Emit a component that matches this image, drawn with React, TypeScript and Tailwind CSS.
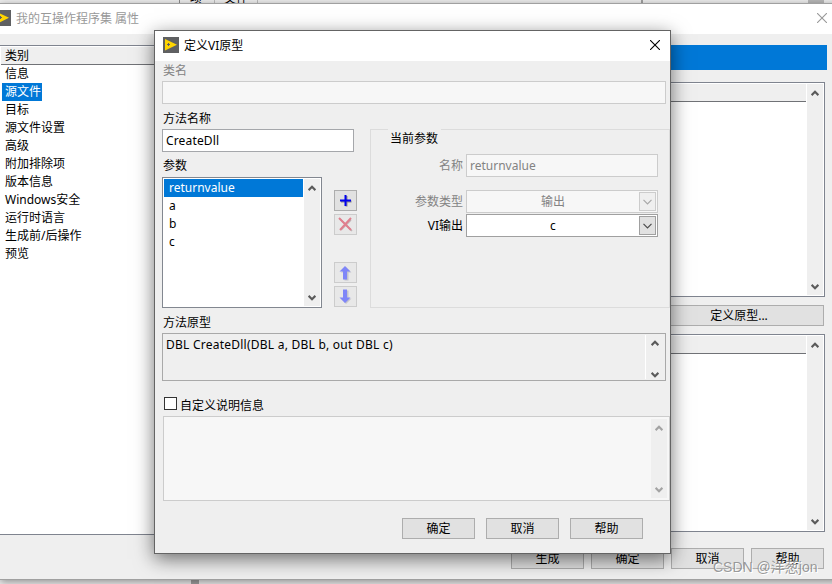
import clsx from "clsx"
import React from "react"

const categories = [
  "信息",
  "源文件",
  "目标",
  "源文件设置",
  "高级",
  "附加排除项",
  "版本信息",
  "Windows安全",
  "运行时语言",
  "生成前/后操作",
  "预览"
]

const parameters = ["returnvalue", "a", "b", "c"]

const LogoIcon: React.FC = () => (
  <svg width="16" height="16" viewBox="0 0 16 16" className="shrink-0">
    <rect width="16" height="16" fill="#5f6062" />
    <path d="M2 2 L14 7.8 L2 13.6 Z" fill="#ffd500" />
    <path d="M4 7.5 H7 M5.5 6 V9" stroke="#5f6062" strokeWidth="1" />
  </svg>
)

const CloseIcon: React.FC<{ color: string }> = ({ color }) => (
  <svg width="10" height="10" viewBox="0 0 10 10" className="shrink-0">
    <path d="M0 0 L10 10 M10 0 L0 10" stroke={color} strokeWidth="1.1" />
  </svg>
)

const Chevron: React.FC<{ up?: boolean, color?: string }> = ({ up, color = "#5a5a5a" }) => (
  <svg width="8" height="7" viewBox="0 0 8 7" className={clsx("shrink-0", !up && "rotate-180")}>
    <path d="M0.6 5.2 L4 1.8 L7.4 5.2" fill="none" stroke={color} strokeWidth="2.1" />
  </svg>
)

const ScrollBar: React.FC<{ className?: string, color?: string }> = ({ className, color }) => (
  <div className={clsx("flex w-4 shrink-0 flex-col items-center justify-between bg-[#efefef]", className)}>
    <Chevron up color={color} />
    <Chevron color={color} />
  </div>
)

const Button: React.FC<{ className?: string, children: React.ReactNode }> = ({ className, children }) => (
  <button className={clsx("flex h-[21px] shrink-0 items-center justify-center border border-[#adadad] bg-[#e1e1e1] pt-px", className)}>
    {children}
  </button>
)

const IconButton: React.FC<{ disabled?: boolean, children: React.ReactNode }> = ({ disabled, children }) => (
  <button
    className={clsx(
      "flex h-[21px] w-[23px] items-center justify-center border",
      disabled ? "border-[#cccccc] bg-[#e8e8e8]" : "border-[#adadad] bg-[#e1e1e1]"
    )}
  >
    {children}
  </button>
)

const Select: React.FC<{ value: string, disabled?: boolean }> = ({ value, disabled }) => (
  <div
    className={clsx(
      "flex h-[23px] w-48 items-center border pr-px",
      disabled ? "border-[#cccccc] bg-[#f7f7f7] text-[#838383]" : "border-[#a0a0a0] bg-white"
    )}
  >
    <span className="flex-1 text-center">{value}</span>
    <span
      className={clsx(
        "flex h-[19px] w-[17px] items-center justify-center border",
        disabled ? "border-[#cccccc] bg-[#efefef]" : "border-[#a0a0a0] bg-[#e1e1e1]"
      )}
    >
      <svg width="9" height="6" viewBox="0 0 9 6">
        <path d="M0.5 0.8 L4.5 4.8 L8.5 0.8" fill="none" stroke={disabled ? "#a8a8a8" : "#4c4c4c"} strokeWidth="1.2" />
      </svg>
    </span>
  </div>
)

const SourceList: React.FC<{ className?: string }> = ({ className }) => (
  <div className={clsx("flex border border-[#7f848f] bg-white py-px pr-px", className)}>
    <div className="mr-px h-[18px] flex-1 border-b border-[#707276] bg-[#efefef]" />
    <ScrollBar className="pt-[6px] pb-[5px]" />
  </div>
)

const PropertiesWindow: React.FC = () => (
  <div className="absolute top-[3px] left-0 flex h-[577px] w-[840px] flex-col border-y border-[#a0a0a0] bg-[#efefef] shadow-[0_2px_8px_rgba(0,0,0,0.4)]">
    <div className="flex h-[30px] shrink-0 items-center bg-white">
      <div className="-ml-[5px] pb-[2px]">
        <LogoIcon />
      </div>
      <span className="ml-[5px] flex-1 text-[#999999]">我的互操作程序集 属性</span>
      <div className="mr-[13px] pb-[2px]">
        <CloseIcon color="#999999" />
      </div>
    </div>
    <div className="flex">
      <div className="mt-[11px] h-[490px] w-[200px] border-y border-[#7f848f] bg-white">
        <div className="mt-px ml-px flex h-[18px] items-center border-b border-[#707276] bg-[#efefef] pt-px pl-1">类别</div>
        <ul>
          {categories.map((name) => (
            <li key={name} className="flex h-[18px] items-center pl-[2px]">
              <span className={clsx("h-[18px] px-[3px] leading-[18px]", name === "源文件" && "bg-[#0078d7] pr-px text-white")}>
                {name}
              </span>
            </li>
          ))}
        </ul>
      </div>
      <div className="flex w-[627px] flex-col">
        <div className="mt-[11px] h-[25px] bg-[#0078d7]" />
        <SourceList className="mt-3 mr-[2px] h-[215px]" />
        <Button className="mt-2 mr-[3px] ml-[454px]">定义原型...</Button>
        <SourceList className="mt-2 mr-[2px] h-[198px]" />
        <div className="mt-4 mr-[3px] flex justify-end gap-[7px]">
          <Button className="w-[73px]">生成</Button>
          <Button className="w-[73px]">确定</Button>
          <Button className="w-[73px]">取消</Button>
          <Button className="w-[73px]">帮助</Button>
        </div>
      </div>
    </div>
  </div>
)

const CurrentParameter: React.FC = () => (
  <fieldset className="ml-[13px] h-[179px] w-[300px] border border-[#dcdcdc]">
    <div className="-mt-px ml-[17px] h-[18px] w-[53px] bg-[#efefef] pl-[2px] leading-[20px]">当前参数</div>
    <div className="mt-[7px] grid grid-cols-[92px_192px] items-center gap-x-[3px] text-right">
      <span className="text-[#838383]">名称</span>
      <div className="flex h-[23px] items-center border border-[#cccccc] bg-[#f7f7f7] pl-[3px] text-[#838383]">returnvalue</div>
      <span className="mt-[13px] text-[#838383]">参数类型</span>
      <div className="mt-[13px]">
        <Select value="输出" disabled />
      </div>
      <span className="mt-px">VI输出</span>
      <div className="mt-px">
        <Select value="c" />
      </div>
    </div>
  </fieldset>
)

const PrototypeDialog: React.FC = () => (
  <div className="absolute top-[30px] left-[154px] flex h-[524px] w-[517px] flex-col border border-[#646464] bg-[#efefef] shadow-[0_5px_18px_rgba(0,0,0,0.55)]">
    <div className="flex h-[30px] shrink-0 items-center bg-white pr-[10px] pl-2">
      <div className="pb-[2px]">
        <LogoIcon />
      </div>
      <span className="ml-[5px] flex-1">定义VI原型</span>
      <div className="pb-[2px]">
        <CloseIcon color="#000000" />
      </div>
    </div>
    <div className="flex flex-col pl-[7px]">
      <div className="h-5 pl-px leading-[20px] text-[#838383]">类名</div>
      <div className="h-[23px] w-[504px] border border-[#cccccc] bg-[#f7f7f7]" />
      <div className="mt-[5px] h-5 pl-px leading-[20px]">方法名称</div>
      <div className="flex">
        <div className="w-[195px]">
          <div className="flex h-[23px] w-48 items-center border border-[#a5a7ab] bg-white pl-[3px] tracking-[0.15px]">CreateDll</div>
          <div className="h-[25px] pl-px leading-[27px]">参数</div>
          <div className="flex">
            <div className="flex h-[131px] w-40 border border-[#828790] bg-white p-px">
              <ul className="mr-px flex-1">
                {parameters.map((name, i) => (
                  <li key={name} className={clsx("h-[18px] pl-[5px] leading-[18px]", i === 0 && "bg-[#0078d7] text-white")}>
                    {name}
                  </li>
                ))}
              </ul>
              <ScrollBar className="pt-[6px] pb-[5px]" />
            </div>
            <div className="mt-[13px] ml-3 flex flex-col gap-[3px]">
              <IconButton>
                <svg width="13" height="13" viewBox="0 0 13 13">
                  <path d="M2 7.5 H12.5 M7.5 2 V12.5" stroke="#8c8c8c" strokeWidth="2" />
                  <path d="M1 6.5 H12 M6.5 1 V12" stroke="#0000f0" strokeWidth="2" />
                </svg>
              </IconButton>
              <IconButton disabled>
                <svg width="15" height="15" viewBox="0 0 15 15">
                  <path d="M2 2 L14 14 M13 3 L3 13" stroke="#c0b4b6" strokeWidth="1.5" />
                  <path d="M1 1 L13 13 M13 1 L2 13" stroke="#e07f8e" strokeWidth="2" />
                </svg>
              </IconButton>
              <div className="mt-6 flex flex-col gap-[3px]">
                <IconButton disabled>
                  <svg width="13" height="16" viewBox="0 0 13 16">
                    <path d="M7 2 L12.5 7.5 H9.5 V15.5 H5.5 V7.5 H2 Z" fill="#c4c4cc" />
                    <path d="M6 1 L11.5 6.5 H8 V14.5 H4 V6.5 H0.5 Z" fill="#7f86f8" />
                  </svg>
                </IconButton>
                <IconButton disabled>
                  <svg width="13" height="16" viewBox="0 0 13 16">
                    <path d="M7 15 L12.5 9.5 H9.5 V1.5 H5.5 V9.5 H2 Z" fill="#c4c4cc" />
                    <path d="M6 14 L11.5 8.5 H8 V0.5 H4 V8.5 H0.5 Z" fill="#7f86f8" />
                  </svg>
                </IconButton>
              </div>
            </div>
          </div>
        </div>
        <CurrentParameter />
      </div>
      <div className="h-[25px] pl-px leading-[29px]">方法原型</div>
      <div className="flex h-12 w-[504px] justify-between border border-[#a9a9a9] pr-[2px] pl-[3px]">
        <span className="leading-[22px] tracking-[0.24px]">DBL CreateDll(DBL a, DBL b, out DBL c)</span>
        <ScrollBar className="my-px w-[18px] border-l border-white pt-[5px] pb-px" />
      </div>
      <div className="mt-4 ml-[2px] flex h-[13px] items-center gap-[3px]">
        <span className="size-[13px] border border-[#333333] bg-white" />
        <span className="mt-[5px]">自定义说明信息</span>
      </div>
      <div className="mt-[6px] ml-px flex h-[85px] w-[507px] justify-end border border-[#cccccc] bg-[#f7f7f7] py-[2px] pr-[2px]">
        <ScrollBar className="pt-[6px] pb-[5px]" color="#a3a3a3" />
      </div>
      <div className="mt-[17px] ml-[240px] flex gap-[11px]">
        <Button className="w-[73px]">确定</Button>
        <Button className="w-[73px]">取消</Button>
        <Button className="w-[73px]">帮助</Button>
      </div>
    </div>
  </div>
)

const App: React.FC = () => {
  return (
    <div className="relative h-[584px] w-[832px] cursor-default overflow-hidden bg-[#ededed] font-['Noto_Sans','Noto_Sans_CJK_SC',sans-serif] text-[12px] leading-[18px] whitespace-nowrap text-black">
      <div className="flex h-1 overflow-hidden">
        <div className="w-[180px] border-r border-[#8c8c8c]" />
        <div className="w-[35px] border-r border-[#bdbdbd] pl-[10px]">
          <div className="-mt-[10px]">项</div>
        </div>
        <div className="w-[43px] border-r border-[#bdbdbd] pl-[9px]">
          <div className="-mt-[10px]">文件</div>
        </div>
        <div className="w-[385px] border-r-2 border-[#a0a0a0]" />
        <div className="ml-[165px] w-4 bg-[#b9b9b9]" />
      </div>
      <div className="mt-[575px] ml-[191px] h-[5px] w-2 bg-[#a0a0a0]" />
      <PropertiesWindow />
      <PrototypeDialog />
      <div className="absolute top-[556px] left-[713px] font-['Liberation_Sans','Noto_Sans_CJK_SC',sans-serif] text-[14px] leading-[22px] text-[#8e8e8e]/90 [text-shadow:1px_1px_0_#ffffff]">
        CSDN @洋葱jon
      </div>
    </div>
  )
}

export default App
